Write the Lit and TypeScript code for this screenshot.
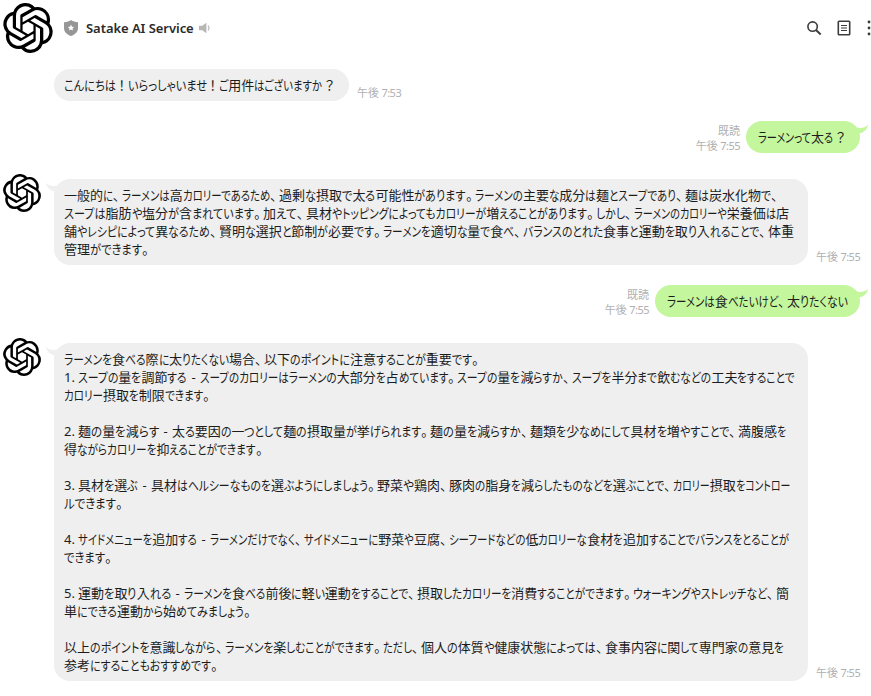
import { LitElement, html, css } from "lit";
import { customElement, property } from "lit/decorators.js";

// A phrase and the width it occupies on its line, in pixels.
type Phrase = [string, number];
type Line = Phrase[];

interface Message {
  from: "bot" | "user";
  time: string;
  avatar?: boolean;
  width: number;
  lines: Line[];
}

const messages: Message[] = [
  {
    from: "bot",
    time: "午後 7:53",
    width: 295,
    lines: [[["こんにちは！", 64], ["いらっしゃいませ！", 91], ["ご用件はございますか？", 118]]],
  },
  { from: "user", time: "午後 7:55", width: 114, lines: [[["ラーメンって太る？", 90]]] },
  {
    from: "bot",
    time: "午後 7:55",
    avatar: true,
    width: 754,
    lines: [
      [["一般的に、", 58], ["ラーメンは高カロリーであるため、", 157], ["過剰な摂取で太る可能性があります。", 196], ["ラーメンの主要な成分は麺とスープであり、", 210], ["麺は炭水化物で、", 95]],
      [["スープは脂肪や塩分が含まれています。", 199], ["加えて、", 43], ["具材やトッピングによってもカロリーが増えることがあります。", 290], ["しかし、", 38], ["ラーメンのカロリーや栄養価は店", 155]],
      [["舗やレシピによって異なるため、", 155], ["賢明な選択と節制が必要です。", 164], ["ラーメンを適切な量で食べ、", 140], ["バランスのとれた食事と運動を取り入れることで、", 245], ["体重", 26]],
      [["管理ができます。", 87]],
    ],
  },
  { from: "user", time: "午後 7:55", width: 205, lines: [[["ラーメンは食べたいけど、", 120], ["太りたくない", 61]]] },
  {
    from: "bot",
    time: "午後 7:55",
    avatar: true,
    width: 754,
    lines: [
      [["ラーメンを食べる際に太りたくない場合、", 200], ["以下のポイントに注意することが重要です。", 217]],
      [["1. ", 14], ["スープの量を調節する", 109], [" - ", 13], ["スープのカロリーはラーメンの大部分を占めています。", 257], ["スープの量を減らすか、", 115], ["スープを半分まで飲むなどの工夫をすることで", 223]],
      [["カロリー摂取を制限できます。", 148]],
      [],
      [["2. ", 14], ["麺の量を減らす", 81], [" - ", 13], ["太る要因の一つとして麺の摂取量が挙げられます。", 258], ["麺の量を減らすか、", 100], ["麺類を少なめにして具材を増やすことで、", 208], ["満腹感を", 48]],
      [["得ながらカロリーを抑えることができます。", 201]],
      [],
      [["3. ", 14], ["具材を選ぶ", 60], [" - ", 13], ["具材はヘルシーなものを選ぶようにしましょう。", 226], ["野菜や鶏肉、", 72], ["豚肉の脂身を減らしたものなどを選ぶことで、", 224], ["カロリー摂取をコントロー", 117]],
      [["ルできます。", 61]],
      [],
      [["4. ", 14], ["サイドメニューを追加する", 119], [" - ", 13], ["ラーメンだけでなく、", 94], ["サイドメニューに野菜や豆腐、", 145], ["シーフードなどの低カロリーな食材を追加することでバランスをとることが", 340]],
      [["できます。", 50]],
      [],
      [["5. ", 14], ["運動を取り入れる", 93], [" - ", 13], ["ラーメンを食べる前後に軽い運動をすることで、", 233], ["摂取したカロリーを消費することができます。", 216], ["ウォーキングやストレッチなど、", 143], ["簡", 13]],
      [["単にできる運動から始めてみましょう。", 189]],
      [],
      [["以上のポイントを意識しながら、", 161], ["ラーメンを楽しむことができます。", 158], ["ただし、", 38], ["個人の体質や健康状態によっては、", 184], ["食事内容に関して専門家の意見を", 179]],
      [["参考にすることもおすすめです。", 156]],
    ],
  },
];

@customElement("knot-logo")
export class KnotLogo extends LitElement {
  static styles = css`
    :host { display: block; }
    svg { display: block; width: 100%; height: 100%; }
  `;
  render() {
    return html`<svg viewBox="0 0 24 24" fill="#000"><path d="M22.2819 9.8211a5.9847 5.9847 0 0 0-.5157-4.9108 6.0462 6.0462 0 0 0-6.5098-2.9A6.0651 6.0651 0 0 0 4.9807 4.1818a5.9847 5.9847 0 0 0-3.9977 2.9 6.0462 6.0462 0 0 0 .7427 7.0966 5.98 5.98 0 0 0 .511 4.9107 6.051 6.051 0 0 0 6.5146 2.9001A5.9847 5.9847 0 0 0 13.2599 24a6.0557 6.0557 0 0 0 5.7718-4.2058 5.9894 5.9894 0 0 0 3.9977-2.9001 6.0557 6.0557 0 0 0-.7475-7.0729zm-9.022 12.6081a4.4755 4.4755 0 0 1-2.8764-1.0408l.1419-.0804 4.7783-2.7582a.7948.7948 0 0 0 .3927-.6813v-6.7369l2.02 1.1686a.071.071 0 0 1 .038.052v5.5826a4.504 4.504 0 0 1-4.4945 4.4944zm-9.6607-4.1254a4.4708 4.4708 0 0 1-.5346-3.0137l.142.0852 4.783 2.7582a.7712.7712 0 0 0 .7806 0l5.8428-3.3685v2.3324a.0804.0804 0 0 1-.0332.0615L9.74 19.9502a4.4992 4.4992 0 0 1-6.1408-1.6464zM2.3408 7.8956a4.485 4.485 0 0 1 2.3655-1.9728V11.6a.7664.7664 0 0 0 .3879.6765l5.8144 3.3543-2.0201 1.1685a.0757.0757 0 0 1-.071 0l-4.8303-2.7865A4.504 4.504 0 0 1 2.3408 7.872zm16.5963 3.8558L13.1038 8.364 15.1192 7.2a.0757.0757 0 0 1 .071 0l4.8303 2.7913a4.4944 4.4944 0 0 1-.6765 8.1042v-5.6772a.79.79 0 0 0-.407-.667zm2.0107-3.0231l-.142-.0852-4.7735-2.7818a.7759.7759 0 0 0-.7854 0L9.409 9.2297V6.8974a.0662.0662 0 0 1 .0284-.0615l4.8303-2.7866a4.4992 4.4992 0 0 1 6.6802 4.66zM8.3065 12.863l-2.02-1.1638a.0804.0804 0 0 1-.038-.0567V6.0742a4.4992 4.4992 0 0 1 7.3757-3.4537l-.142.0805L8.704 5.459a.7948.7948 0 0 0-.3927.6813zm1.0976-2.3654l2.602-1.4998 2.6069 1.4998v2.9994l-2.5974 1.4997-2.6067-1.4997Z"/></svg>`;
  }
}

// One phrase of message text; its kana are condensed so that the phrase fills its width.
@customElement("fitted-phrase")
export class FittedPhrase extends LitElement {
  @property() text = "";
  @property({ type: Number }) width = 0;

  static styles = css`
    :host { display: inline-block; white-space: pre; }
    .kana { display: inline-block; transform-origin: 0 50%; }
    .stop, .mark, .dash { display: inline-block; }
    .stop { padding: 0 2.5px 0 0; }
    .mark { padding: 0 3px 0 2.5px; }
    .dash { padding-left: 1px; }
  `;

  async firstUpdated() {
    this.fit();
    await document.fonts.ready;
    this.fit();
  }

  private fit() {
    const kana = [...this.renderRoot.querySelectorAll<HTMLElement>(".kana")];
    const others = [...this.renderRoot.querySelectorAll<HTMLElement>("span:not(.kana)")];
    kana.forEach((k) => {
      k.style.transform = "none";
      k.style.marginRight = "0";
    });
    const widths = kana.map((k) => k.getBoundingClientRect().width);
    const kanaWidth = widths.reduce((a, b) => a + b, 0);
    const otherWidth = others.reduce((a, o) => a + o.getBoundingClientRect().width, 0);
    if (!kanaWidth) return;
    const scale = (this.width - otherWidth) / kanaWidth;
    kana.forEach((k, i) => {
      k.style.transform = `scaleX(${scale})`;
      k.style.marginRight = `${widths[i] * (scale - 1)}px`;
    });
  }

  private kind(run: string) {
    if (/^[\u3040-\u30ff]/.test(run)) return "kana";
    if (/^[、。]/.test(run)) return "stop";
    if (/^[！？]/.test(run)) return "mark";
    return run === " - " ? "dash" : "other";
  }

  render() {
    const runs = this.text.match(/[\u3040-\u30ff]+|[、。]|[！？]|[^\u3040-\u30ff、。！？]+/g) ?? [];
    return runs.map((r) => html`<span class=${this.kind(r)}>${r}</span>`);
  }
}

@customElement("chat-message")
export class ChatMessage extends LitElement {
  @property({ attribute: false }) message!: Message;

  static styles = css`
    :host { display: block; }
    .row { display: flex; align-items: stretch; }
    .row.user { justify-content: flex-end; padding-right: 11px; }
    .side { width: 54px; flex: none; }
    .avatar { width: 38px; height: 38px; margin: -5px 0 0 3px; }
    .bubble {
      position: relative;
      box-sizing: border-box;
      flex: none;
      padding: 7px 0 7px 10px;
      border-radius: 16px;
      background: #efefef;
      color: #1c1c1c;
      font-size: 13px;
      line-height: 18px;
      font-feature-settings: "palt";
    }
    .user .bubble { background: #c3f69d; padding-left: 12px; }
    .line { display: flex; height: 18px; white-space: pre; }
    .tail { position: absolute; display: block; }
    .bot .tail { left: -8px; top: 3px; width: 18px; height: 12px; }
    .user .tail { right: -8px; top: 3px; width: 18px; height: 12px; }
    .meta {
      display: flex;
      flex-direction: column;
      justify-content: flex-end;
      padding: 0 0 1px 8px;
      color: #b0b0b0;
      font-size: 11px;
      line-height: 15px;
      white-space: nowrap;
    }
    .user .meta { align-items: flex-end; padding: 0 6px 0 0; }
    .digits { letter-spacing: -0.5px; }
  `;

  render() {
    const m = this.message;
    const user = m.from === "user";
    const [half, clock] = m.time.split(" ");
    const time = html`<span>${half}<span class="digits"> ${clock}</span></span>`;
    const tail = user
      ? html`<svg class="tail" viewBox="0 0 18 12"><path fill="#c3f69d" d="M2 1C5 3 7 4 10 4C13.500 4 16 3 18 .8C17.500 5 14 9 9 9.500Z"/></svg>`
      : html`<svg class="tail" viewBox="0 0 18 12"><path fill="#efefef" d="M16 1C13 3 11 4 8 4C4.500 4 2 3 0 .8C.5 5 4 9 9 9.500Z"/></svg>`;
    const bubble = html`<div class="bubble" style="width:${m.width}px">
      ${user || m.avatar ? tail : ""}
      ${m.lines.map((l) => html`<div class="line">${l.map(([t, w]) => html`<fitted-phrase style="width:${w}px" .text=${t} .width=${w}></fitted-phrase>`)}</div>`)}
    </div>`;
    return user
      ? html`<div class="row user"><div class="meta"><span>既読</span>${time}</div>${bubble}</div>`
      : html`<div class="row bot">
          <div class="side">${m.avatar ? html`<knot-logo class="avatar"></knot-logo>` : ""}</div>
          ${bubble}<div class="meta">${time}</div>
        </div>`;
  }
}

@customElement("app-root")
export class AppRoot extends LitElement {
  static styles = css`
    :host {
      display: block;
      width: 871px;
      height: 696px;
      overflow: hidden;
      background: #fff;
      font-family: "Noto Sans", "Noto Sans CJK JP", sans-serif;
    }
    header { display: flex; align-items: center; height: 56px; padding-left: 3px; box-sizing: border-box; }
    .logo { width: 50px; height: 50px; }
    .shield { width: 14px; height: 16px; margin-left: 11px; }
    h1 { margin: 0 0 0 8px; font: 600 13px/20px "Noto Sans", sans-serif; color: #2a2a2a; width: 108px; white-space: nowrap; letter-spacing: -0.05px; }
    .speaker { width: 12px; height: 12px; margin-left: 5px; }
    .tools { display: flex; align-items: center; margin-left: auto; }
    .search { width: 16px; height: 16px; }
    .note { width: 14px; height: 16px; margin-left: 15px; }
    .more { width: 4px; height: 16px; margin-left: 16px; }
    main { display: flex; flex-direction: column; padding-top: 13px; }
    chat-message.bot + chat-message.user { margin-top: 20px; }
    chat-message.user + chat-message.bot { margin-top: 26px; }
  `;

  render() {
    return html`
      <header>
        <knot-logo class="logo"></knot-logo>
        <svg class="shield" viewBox="0 0 14 16"><path fill="#969696" d="M0 2.200C3 2 5 1.500 7 0c2 1.500 4 2 7 2.200V8c0 4-3 6.500-7 8-4-1.500-7-4-7-8z"/><path fill="#fff" d="M7 4.600l.95 2.050 2.200.25-1.650 1.500.45 2.200L7 9.500l-1.950 1.100.45-2.200-1.650-1.500 2.200-.25z"/></svg>
        <h1>Satake AI Service</h1>
        <svg class="speaker" viewBox="0 0 13 12"><path fill="#b7b7b7" d="M0 3.500h3.500L8 .3v11.400L3.500 8.500H0z"/><path d="M9.800 3.300q2.200 2.700 0 5.400" fill="none" stroke="#b7b7b7" stroke-width="1.200"/></svg>
        <div class="tools">
          <svg class="search" viewBox="0 0 16 16" fill="none" stroke="#3c3c3c"><circle cx="6.600" cy="6.600" r="4.700" stroke-width="1.600"/><path d="M10 10l4.700 4.500" stroke-width="1.900"/></svg>
          <svg class="note" viewBox="0 0 14 16" fill="none" stroke="#3c3c3c"><rect x="1.300" y="1.300" width="11.400" height="13.400" rx=".8" stroke-width="1.600"/><path d="M4 5.500h6M4 8h6M4 10.500h6" stroke-width="1.200"/></svg>
          <svg class="more" viewBox="0 0 4 16" fill="#3c3c3c"><circle cx="2" cy="2" r="1.400"/><circle cx="2" cy="8" r="1.400"/><circle cx="2" cy="14" r="1.400"/></svg>
        </div>
      </header>
      <main>${messages.map((m) => html`<chat-message class=${m.from} .message=${m}></chat-message>`)}</main>
    `;
  }
}
